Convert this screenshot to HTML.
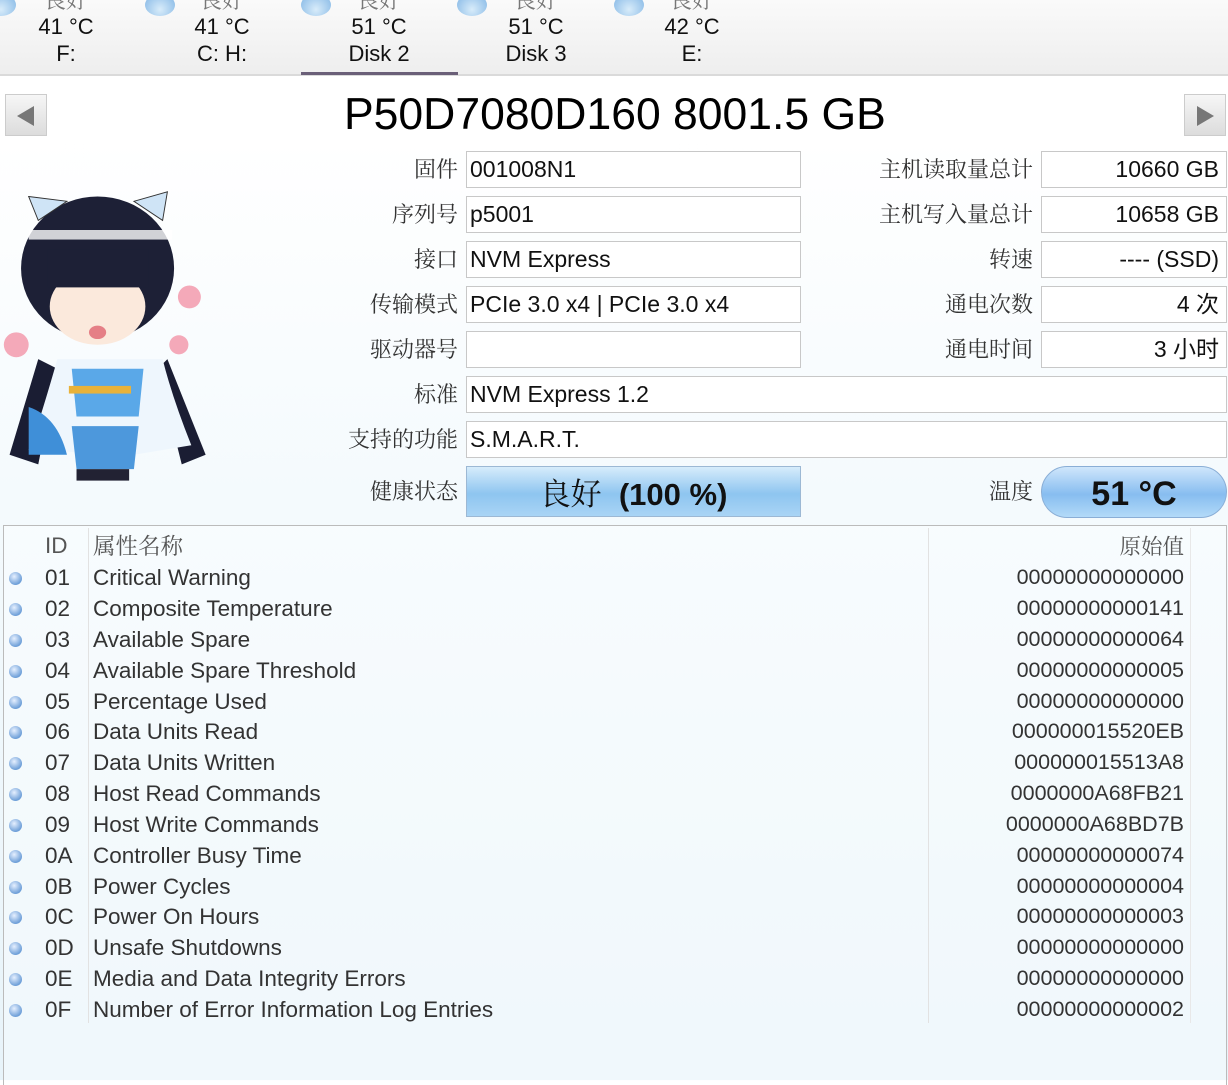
<!DOCTYPE html>
<html><head><meta charset="utf-8"><style>
*{margin:0;padding:0;box-sizing:border-box}
body{width:1228px;height:1080px;overflow:hidden;position:relative;font-family:"Liberation Sans","Noto Sans CJK SC",sans-serif;color:#111;
background:linear-gradient(180deg,#fff 0,#fff 140px,#f4fafd 500px,#e8f4fa 1080px);}
.a{position:absolute;white-space:nowrap}
.tab{position:absolute;top:0;width:156px;text-align:center;font-size:22px;line-height:27px;color:#111}
.tab .s{color:#777;font-family:"Noto Serif CJK SC",serif;margin-top:-14px}
.dot{position:absolute;width:30px;height:22px;border-radius:50%;background:radial-gradient(circle at 50% 70%,#d8ecfa,#7fb4e4);top:-6px}
.lbl{position:absolute;font-family:"Noto Serif CJK SC",serif;font-size:22px;color:#333;text-align:right;line-height:36px}
.box{position:absolute;height:37px;border:1px solid #c8c8c8;background:#fff;font-size:23px;line-height:35px;padding:0 3px;color:#111}
.r{text-align:right;padding-right:7px}
.row{position:absolute;left:0;width:1190px;height:31px;font-size:22.5px;line-height:31px;color:#333}
.row .b{position:absolute;left:9px;top:10px;width:13px;height:13px;border-radius:50%;background:radial-gradient(circle at 40% 35%,#e6f0ff,#6e9fd8 70%)}
.row .i{position:absolute;left:45px}
.row .n{position:absolute;left:93px}
.row .v{position:absolute;right:6px;font-size:21.5px}
</style></head><body>
<div class="a" style="left:0;top:0;width:1228px;height:76px;background:linear-gradient(#fafafa,#eeeeee);border-bottom:2px solid #dadada"></div>
<div class="dot" style="left:-14px"></div><div class="dot" style="left:145px"></div><div class="dot" style="left:301px"></div><div class="dot" style="left:457px"></div><div class="dot" style="left:614px"></div>
<div class="tab" style="left:-12px"><div class="s">良好</div>41 °C<br>F:</div>
<div class="tab" style="left:144px"><div class="s">良好</div>41 °C<br>C: H:</div>
<div class="tab" style="left:301px"><div class="s">良好</div>51 °C<br>Disk 2</div>
<div class="tab" style="left:458px"><div class="s">良好</div>51 °C<br>Disk 3</div>
<div class="tab" style="left:614px"><div class="s">良好</div>42 °C<br>E:</div>
<div class="a" style="left:301px;top:72px;width:157px;height:3px;background:#6a5f78"></div>
<div class="a" style="left:5px;top:94px;width:42px;height:42px;border:1px solid #ccc;background:linear-gradient(#f6f6f6,#dcdcdc)"><div style="position:absolute;left:11px;top:11px;border-right:17px solid #777;border-top:10px solid transparent;border-bottom:10px solid transparent"></div></div>
<div class="a" style="left:1184px;top:94px;width:42px;height:42px;border:1px solid #ccc;background:linear-gradient(#f6f6f6,#dcdcdc)"><div style="position:absolute;left:12px;top:11px;border-left:17px solid #777;border-top:10px solid transparent;border-bottom:10px solid transparent"></div></div>
<div class="a" style="left:344px;top:88px;font-size:44.5px;line-height:54px;color:#000">P50D7080D160 8001.5 GB</div>
<svg class="a" style="left:0;top:175px" width="220" height="330" viewBox="0 0 230 340">
<path d="M40 190 L10 290 L40 300 L60 200Z" fill="#1a1d33"/><path d="M175 190 L215 290 L190 300 L165 200Z" fill="#1a1d33"/>
<path d="M60 190 Q40 260 30 285 L140 290 L200 280 Q180 230 170 190Z" fill="#eef6fd"/>
<path d="M30 240 Q60 250 70 290 L30 290Z" fill="#3f8fd8"/><path d="M75 200 L150 200 L145 250 L80 250Z" fill="#5aa8e8"/>
<rect x="72" y="218" width="65" height="8" fill="#e8b23a"/>
<path d="M75 260 L145 260 L140 305 L80 305Z" fill="#4d98dc"/>
<rect x="80" y="305" width="55" height="12" fill="#223"/>
<ellipse cx="102" cy="95" rx="80" ry="75" fill="#1d2036"/>
<rect x="30" y="55" width="150" height="10" fill="#fff" opacity=".8"/>
<ellipse cx="102" cy="135" rx="50" ry="40" fill="#fbe9dc"/>
<rect x="50" y="75" width="105" height="40" fill="#1d2036"/>
<ellipse cx="102" cy="162" rx="9" ry="7" fill="#e57f86"/>
<path d="M30 20 L70 25 L40 45Z M140 25 L175 15 L170 45Z" fill="#cfe4f6" stroke="#333"/>
<g fill="#f4a9b9"><circle cx="198" cy="125" r="12"/><circle cx="187" cy="175" r="10"/><circle cx="17" cy="175" r="13"/></g>
</svg>
<div class="lbl" style="left:300px;width:158px;top:151px">固件</div>
<div class="lbl" style="left:300px;width:158px;top:196px">序列号</div>
<div class="lbl" style="left:300px;width:158px;top:241px">接口</div>
<div class="lbl" style="left:300px;width:158px;top:286px">传输模式</div>
<div class="lbl" style="left:300px;width:158px;top:331px">驱动器号</div>
<div class="lbl" style="left:300px;width:158px;top:376px">标准</div>
<div class="lbl" style="left:300px;width:158px;top:421px">支持的功能</div>
<div class="lbl" style="left:300px;width:158px;top:473px">健康状态</div>
<div class="box" style="left:466px;top:151px;width:335px">001008N1</div>
<div class="box" style="left:466px;top:196px;width:335px">p5001</div>
<div class="box" style="left:466px;top:241px;width:335px">NVM Express</div>
<div class="box" style="left:466px;top:286px;width:335px">PCIe 3.0 x4 | PCIe 3.0 x4</div>
<div class="box" style="left:466px;top:331px;width:335px"></div>
<div class="box" style="left:466px;top:376px;width:761px">NVM Express 1.2</div>
<div class="box" style="left:466px;top:421px;width:761px">S.M.A.R.T.</div>
<div class="lbl" style="left:830px;width:203px;top:151px">主机读取量总计</div>
<div class="lbl" style="left:830px;width:203px;top:196px">主机写入量总计</div>
<div class="lbl" style="left:830px;width:203px;top:241px">转速</div>
<div class="lbl" style="left:830px;width:203px;top:286px">通电次数</div>
<div class="lbl" style="left:830px;width:203px;top:331px">通电时间</div>
<div class="lbl" style="left:830px;width:203px;top:473px">温度</div>
<div class="box r" style="left:1041px;top:151px;width:186px">10660 GB</div>
<div class="box r" style="left:1041px;top:196px;width:186px">10658 GB</div>
<div class="box r" style="left:1041px;top:241px;width:186px">---- (SSD)</div>
<div class="box r" style="left:1041px;top:286px;width:186px">4 次</div>
<div class="box r" style="left:1041px;top:331px;width:186px">3 小时</div>
<div class="a" style="left:466px;top:466px;width:335px;height:51px;border:1px solid #9cb8d4;background:linear-gradient(#d6ecfb,#8ec5f0 55%,#a9d4f5);text-align:center;font-size:31px;line-height:50px;color:#111"><span style="font-family:'Noto Serif CJK SC',serif">良好</span>&nbsp; <b>(100 %)</b></div>
<div class="a" style="left:1041px;top:466px;width:186px;height:52px;border:1px solid #8aaed6;border-radius:26px;background:linear-gradient(#cfe6fb,#87bdf0 55%,#b3daf8);text-align:center;font-size:34px;line-height:54px;font-weight:bold;color:#111">51 °C</div>
<div class="a" style="left:3px;top:525px;width:1224px;height:560px;border:1px solid #bbb;border-bottom:none;background:rgba(255,255,255,.35)"></div>
<div class="a" style="left:88px;top:528px;width:1px;height:495px;background:#e2e2e2"></div>
<div class="a" style="left:928px;top:528px;width:1px;height:495px;background:#e2e2e2"></div>
<div class="a" style="left:1190px;top:528px;width:1px;height:495px;background:#e8e8e8"></div>
<div class="row" style="top:530px;color:#555"><span class="i">ID</span><span class="n" style="font-family:'Noto Serif CJK SC',serif">属性名称</span><span class="v" style="font-family:'Noto Serif CJK SC',serif">原始值</span></div>
<div class="row" style="top:562px"><i class="b"></i><span class="i">01</span><span class="n">Critical Warning</span><span class="v">00000000000000</span></div>
<div class="row" style="top:593px"><i class="b"></i><span class="i">02</span><span class="n">Composite Temperature</span><span class="v">00000000000141</span></div>
<div class="row" style="top:624px"><i class="b"></i><span class="i">03</span><span class="n">Available Spare</span><span class="v">00000000000064</span></div>
<div class="row" style="top:655px"><i class="b"></i><span class="i">04</span><span class="n">Available Spare Threshold</span><span class="v">00000000000005</span></div>
<div class="row" style="top:686px"><i class="b"></i><span class="i">05</span><span class="n">Percentage Used</span><span class="v">00000000000000</span></div>
<div class="row" style="top:716px"><i class="b"></i><span class="i">06</span><span class="n">Data Units Read</span><span class="v">000000015520EB</span></div>
<div class="row" style="top:747px"><i class="b"></i><span class="i">07</span><span class="n">Data Units Written</span><span class="v">000000015513A8</span></div>
<div class="row" style="top:778px"><i class="b"></i><span class="i">08</span><span class="n">Host Read Commands</span><span class="v">0000000A68FB21</span></div>
<div class="row" style="top:809px"><i class="b"></i><span class="i">09</span><span class="n">Host Write Commands</span><span class="v">0000000A68BD7B</span></div>
<div class="row" style="top:840px"><i class="b"></i><span class="i">0A</span><span class="n">Controller Busy Time</span><span class="v">00000000000074</span></div>
<div class="row" style="top:871px"><i class="b"></i><span class="i">0B</span><span class="n">Power Cycles</span><span class="v">00000000000004</span></div>
<div class="row" style="top:901px"><i class="b"></i><span class="i">0C</span><span class="n">Power On Hours</span><span class="v">00000000000003</span></div>
<div class="row" style="top:932px"><i class="b"></i><span class="i">0D</span><span class="n">Unsafe Shutdowns</span><span class="v">00000000000000</span></div>
<div class="row" style="top:963px"><i class="b"></i><span class="i">0E</span><span class="n">Media and Data Integrity Errors</span><span class="v">00000000000000</span></div>
<div class="row" style="top:994px"><i class="b"></i><span class="i">0F</span><span class="n">Number of Error Information Log Entries</span><span class="v">00000000000002</span></div>
</body></html>
